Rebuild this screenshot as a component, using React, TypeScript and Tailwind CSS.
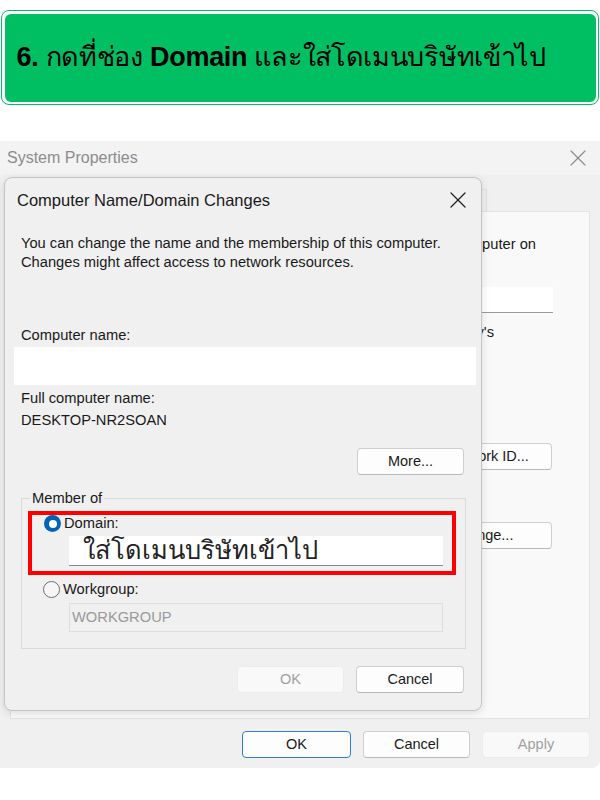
import { X } from "lucide-react";

const font = "font-['Liberation_Sans','Noto_Sans',sans-serif]";

const WinButton = ({
  label,
  width,
  disabled,
  primary,
}: {
  label: string;
  width: string;
  disabled?: boolean;
  primary?: boolean;
}) => (
  <button
    className={
      width +
      " h-[27px] rounded-[4px] text-[14.5px] leading-none " +
      (disabled
        ? "bg-[#f9f9f9] border border-[#ececec] text-[#a0a0a0]"
        : primary
        ? "bg-[#fdfdfd] border-[1.5px] border-[#2d7fd0] text-[#1a1a1a]"
        : "bg-[#fdfdfd] border border-[#cfcfcf] border-b-[#b8b8b8] text-[#1a1a1a]")
    }
  >
    {label}
  </button>
);

const Radio = ({ checked }: { checked?: boolean }) =>
  checked ? (
    <span className="w-[17px] h-[17px] rounded-full bg-[#0063b8] flex items-center justify-center shrink-0">
      <span className="w-[8px] h-[8px] rounded-full bg-white" />
    </span>
  ) : (
    <span className="w-[17px] h-[17px] rounded-full border border-[#6b6b6b] bg-[#f6f6f6] shrink-0" />
  );

const DomainDialog = () => (
  <div className="absolute left-[4px] top-[36px] w-[478px] h-[534px] rounded-[8px] border border-[#c4c4c4] bg-[#f0f0f0] shadow-[0_2px_8px_rgba(0,0,0,0.12)] flex flex-col text-[#1a1a1a]">
    <div className="h-[44px] flex items-center justify-between pl-[12px] pr-[9px]">
      <span className="text-[16.5px]">Computer Name/Domain Changes</span>
      <X size={28} strokeWidth={1.1} className="text-[#222]" />
    </div>

    <div className="mt-[12px] px-[16px] text-[14.7px] leading-[19px]">
      <p>You can change the name and the membership of this computer.</p>
      <p>Changes might affect access to network resources.</p>
    </div>

    <p className="mt-[54px] px-[16px] text-[14.7px] leading-[19px]">Computer name:</p>
    <div className="mt-[2px] ml-[9px] mr-[5px] h-[38px] bg-white" />

    <p className="mt-[4px] px-[16px] text-[14.7px] leading-[19px]">Full computer name:</p>
    <p className="mt-[3px] px-[16px] text-[14.7px] leading-[19px]">DESKTOP-NR2SOAN</p>

    <div className="mt-[18px] mr-[17px] flex justify-end">
      <WinButton label="More..." width="w-[107px]" />
    </div>

    <fieldset className="mt-[14px] ml-[16px] mr-[15px] border border-[#dadada] pb-[16px]">
      <legend className="ml-[8px] px-[2px] text-[14.7px] leading-[19px]">Member of</legend>
      <div className="mt-[3px] ml-[6px] mr-[9px] border-[4px] border-[#ff0000] pb-[5px]">
        <div className="flex items-center gap-[3px] pl-[12px]">
          <Radio checked />
          <span className="text-[14.7px] leading-[17px]">Domain:</span>
        </div>
        <div className="mt-[4px] ml-[37px] mr-[9px] h-[30px] bg-white border-b border-[#8a8a8a] flex items-center pl-[14px]">
          <span className="text-[25.5px] leading-none text-[#222] font-['Tahoma','DejaVu_Sans',serif]">
            ใส่โดเมนบริษัทเข้าไป
          </span>
        </div>
      </div>
      <div className="mt-[6px] flex items-center gap-[3px] pl-[21px]">
        <Radio />
        <span className="text-[14.7px] leading-[17px]">Workgroup:</span>
      </div>
      <div className="mt-[5px] ml-[47px] mr-[22px] h-[29px] bg-[#f0f0f0] border border-[#dedede] flex items-center pl-[2px]">
        <span className="text-[14.7px] text-[#9a9a9a]">WORKGROUP</span>
      </div>
    </fieldset>

    <div className="mt-[17px] mr-[17px] flex justify-end gap-[12px]">
      <WinButton label="OK" width="w-[107px]" disabled />
      <WinButton label="Cancel" width="w-[108px]" />
    </div>
  </div>
);

const SystemProperties = () => (
  <div className="relative w-[600px] h-[627px] bg-[#f0f0f0] flex flex-col rounded-br-[8px] text-[#1a1a1a]">
    <div className="h-[34px] bg-[#f3f3f3] flex items-center justify-between pl-[7px] pr-[8px]">
      <span className="text-[16px] text-[#8c8c8c]">System Properties</span>
      <X size={28} strokeWidth={1} className="text-[#8c8c8c]" />
    </div>

    <div className="mt-[14px] ml-[10px] flex h-[22px] text-[14.7px]">
      <div className="w-[120px] bg-[#f9f9f9] border border-b-0 border-[#e2e2e2] flex items-center justify-center">Computer Name</div>
      <div className="w-[85px] flex items-center justify-center border-t border-r border-[#e2e2e2]">Hardware</div>
      <div className="w-[85px] flex items-center justify-center border-t border-r border-[#e2e2e2]">Advanced</div>
      <div className="w-[125px] flex items-center justify-center border-t border-r border-[#e2e2e2]">System Protection</div>
      <div className="w-[62px] flex items-center justify-center border-t border-r border-[#e2e2e2]">Remote</div>
    </div>

    <div className="mx-[10px] h-[508px] bg-[#f9f9f9] border border-[#e3e3e3] flex flex-col text-[14.7px] leading-[19px]">
      <div className="mt-[23px] ml-auto mr-[53px] w-fit whitespace-nowrap">
        <p>Windows uses the following information to identify your computer on</p>
        <p>the network.</p>
      </div>
      <div className="mt-[14px] flex items-center">
        <span className="ml-[20px] w-[160px]">Computer description:</span>
        <div className="ml-auto mr-[36px] w-[330px] h-[26px] bg-white border-b border-[#9a9a9a]" />
      </div>
      <div className="mt-[10px] ml-auto mr-[95px] w-fit whitespace-nowrap">
        <p>For example: "Kitchen Computer" or "Mary's</p>
        <p>Computer".</p>
      </div>
      <div className="mt-[12px] ml-[20px] grid grid-cols-[160px_1fr] gap-y-[12px]">
        <span>Full computer name:</span>
        <span>DESKTOP-NR2SOAN</span>
        <span>Workgroup:</span>
        <span>WORKGROUP</span>
      </div>
      <div className="mt-[14px] ml-[20px] mr-[37px] flex items-center justify-between">
        <p className="w-[280px]">To use a wizard to join a domain or workgroup, click Network ID.</p>
        <WinButton label="Network ID..." width="w-[130px]" />
      </div>
      <div className="mt-[41px] ml-[20px] mr-[37px] flex items-center justify-between">
        <p className="w-[280px]">To rename this computer or change its domain or workgroup, click Change.</p>
        <WinButton label="Change..." width="w-[140px]" />
      </div>
    </div>

    <div className="mt-[12px] mr-[10px] flex justify-end gap-[12px]">
      <WinButton label="OK" width="w-[109px]" primary />
      <WinButton label="Cancel" width="w-[107px]" />
      <WinButton label="Apply" width="w-[108px]" disabled />
    </div>

    <DomainDialog />
  </div>
);

export default function App() {
  return (
    <div className={"w-[600px] h-[800px] bg-white pt-[10px] " + font}>
      <div className="mx-[1px] h-[95px] rounded-[8px] border-[1.5px] border-[#00bf63] p-[2.5px]">
        <div className="h-full rounded-[6px] bg-[#00bf63] flex items-center pl-[12px]">
          <p className="text-[27px] text-black tracking-[-0.3px]">
            <b>6.</b> กดที่ช่อง <b>Domain</b> และใส่โดเมนบริษัทเข้าไป
          </p>
        </div>
      </div>
      <div className="mt-[36px]">
        <SystemProperties />
      </div>
    </div>
  );
}
